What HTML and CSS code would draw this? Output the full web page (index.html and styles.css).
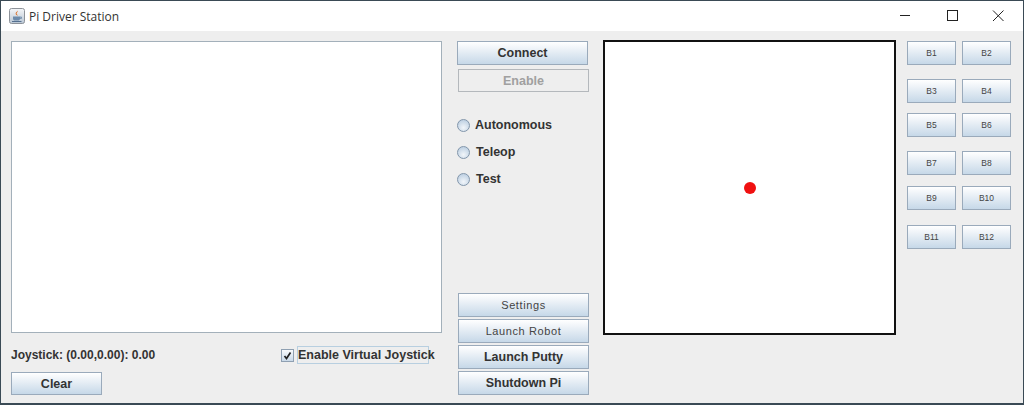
FILE: index.html
```html
<!DOCTYPE html>
<html lang="en">
<head>
<meta charset="utf-8">
<title>Pi Driver Station</title>
<link rel="stylesheet" href="styles.css">
</head>
<body>
<div class="window">
  <header class="titlebar">
    <svg class="app-icon" width="16" height="16" viewBox="0 0 16 16">
      <defs>
        <linearGradient id="tile" x1="0" y1="0" x2="0" y2="1">
          <stop offset="0" stop-color="#f4f6f8"/>
          <stop offset="1" stop-color="#b9c6d4"/>
        </linearGradient>
      </defs>
      <rect x="0.5" y="0.5" width="15" height="15" rx="2" fill="url(#tile)" stroke="#8d9299"/>
      <path d="M8.5 2.5c1 1.500-1.500 2.200-.7 3.600.4.700 1 .9.900 1.700-1-.6-2.500-1.400-2-2.800.4-1 1.800-1.300 1.800-2.500z" fill="#d9712b"/>
      <path d="M4 8.500h7v2.200c0 1.200-1 1.800-2 1.800H6c-1 0-2-.6-2-1.800z" fill="#6d8bab"/>
      <path d="M11 9h1.500v1.500H11z" fill="none" stroke="#6d8bab" stroke-width=".8"/>
      <path d="M3 13.500h9.500" stroke="#55708f" stroke-width="1"/>
    </svg>
    <span class="title-text">Pi Driver Station</span>
    <div class="caption">
      <svg class="cap-btn" width="46" height="30" viewBox="0 0 46 30"><path d="M17 14.500h10" stroke="#222" fill="none"/></svg>
      <svg class="cap-btn" width="46" height="30" viewBox="0 0 46 30"><rect x="18.500" y="9.500" width="10" height="10" stroke="#222" fill="none"/></svg>
      <svg class="cap-btn" width="46" height="30" viewBox="0 0 46 30"><path d="M18 9.500l10.500 10.500M28.500 9.500L18 20" stroke="#222" fill="none"/></svg>
    </div>
  </header>
  <main class="content">
    <section class="col-left">
      <div class="textarea"></div>
      <div class="status-row">
        <span class="joy-label">Joystick: (0.00,0.00): 0.00</span>
        <label class="check">
          <span class="check-box"><svg width="9" height="9" viewBox="0 0 9 9"><path d="M1.500 5l2 2.500L7.500 1.500" fill="none" stroke="#222" stroke-width="1.700"/></svg></span>
          <span class="check-text">Enable Virtual Joystick</span>
        </label>
      </div>
      <button class="btn btn-bold btn-clear">Clear</button>
    </section>
    <section class="col-mid">
      <button class="btn btn-bold btn-connect">Connect</button>
      <button class="btn btn-bold btn-disabled">Enable</button>
      <div class="radios">
        <div class="radio"><span class="radio-dot"></span><span>Autonomous</span></div>
        <div class="radio radio-indent"><span class="radio-dot"></span><span>Teleop</span></div>
        <div class="radio radio-indent"><span class="radio-dot"></span><span>Test</span></div>
      </div>
      <div class="actions">
        <button class="btn btn-light">Settings</button>
        <button class="btn btn-light">Launch Robot</button>
        <button class="btn btn-bold">Launch Putty</button>
        <button class="btn btn-bold">Shutdown Pi</button>
      </div>
    </section>
    <section class="canvas"><span class="dot"></span></section>
    <section class="pad">
      <div class="pad-row"><button class="btn btn-small">B1</button><button class="btn btn-small">B2</button></div>
      <div class="pad-row gap-14"><button class="btn btn-small">B3</button><button class="btn btn-small">B4</button></div>
      <div class="pad-row gap-10"><button class="btn btn-small">B5</button><button class="btn btn-small">B6</button></div>
      <div class="pad-row gap-14"><button class="btn btn-small">B7</button><button class="btn btn-small">B8</button></div>
      <div class="pad-row gap-12"><button class="btn btn-small">B9</button><button class="btn btn-small">B10</button></div>
      <div class="pad-row gap-15"><button class="btn btn-small">B11</button><button class="btn btn-small">B12</button></div>
    </section>
  </main>
</div>
</body>
</html>
```
FILE: styles.css
```css
* { box-sizing: border-box; }
html, body { margin: 0; padding: 0; }
body { width: 1024px; height: 405px; overflow: hidden; font-family: "Liberation Sans", Arial, sans-serif; }

.window {
  width: 1024px;
  height: 405px;
  display: flex;
  flex-direction: column;
  background: #eeeeee;
  border: 1px solid #3a4a55;
  border-bottom-width: 2px;
}

.titlebar {
  height: 30px;
  flex: none;
  display: flex;
  align-items: center;
  background: #ffffff;
  padding-left: 8px;
}
.app-icon { flex: none; }
.title-text {
  margin-left: 4px;
  font-family: "Open Sans", sans-serif;
  font-size: 12px;
  color: #333333;
}
.caption { margin-left: auto; display: flex; margin-right: 2px; }
.cap-btn { display: block; }

.content { flex: 1; display: flex; padding: 10px 0 0 10px; align-items: flex-start; min-height: 0; }

.btn {
  display: block;
  margin: 0;
  padding: 0;
  font-family: "Liberation Sans", Arial, sans-serif;
  color: #333333;
  border: 1px solid #9aaabb;
  background: linear-gradient(180deg, #ffffff 0%, #eef3f8 30%, #c6d8e8 100%);
  text-align: center;
}
.btn-bold { font-size: 12.500px; font-weight: bold; }
.btn-light { font-size: 11px; letter-spacing: 0.600px; color: #444444; }
.btn-small { width: 49px; height: 24px; font-size: 8.500px; color: #444444; }

.col-left { width: 431px; flex: none; display: flex; flex-direction: column; }
.textarea { height: 292px; background: #ffffff; border: 1px solid #a3b0ba; }
.status-row { display: flex; align-items: center; justify-content: space-between; height: 18px; margin-top: 13px; padding-right: 13px; }
.joy-label { font-size: 12px; font-weight: bold; color: #333333; }
.check { display: flex; align-items: center; gap: 3px; }
.check-box {
  width: 13px;
  height: 13px;
  display: flex;
  align-items: center;
  justify-content: center;
  border: 1px solid #8fa0b2;
  background: linear-gradient(180deg, #f8fafc, #c9d9e8);
}
.check-text {
  height: 18px;
  line-height: 16px;
  width: 132px;
  font-size: 12.500px;
  font-weight: bold;
  color: #333333;
  border: 1px solid #b8cfe0;
  text-align: center;
  white-space: nowrap;
}
.btn-clear { width: 91px; height: 23px; margin-top: 8px; }

.col-mid { width: 132px; height: 354px; margin-left: 15px; flex: none; display: flex; flex-direction: column; align-items: flex-start; }
.btn-connect { width: 131px; height: 24px; }
.btn-disabled {
  width: 131px;
  height: 23px;
  margin: 4px 0 0 1px;
  background: #eeeeee;
  color: #a0a0a0;
  border-color: #b4b8bc;
}
.radios { margin-top: 24px; display: flex; flex-direction: column; gap: 9px; }
.radio { display: flex; align-items: center; gap: 5px; height: 18px; font-size: 12.500px; font-weight: bold; color: #333333; }
.radio-indent { gap: 6px; }
.radio-dot {
  width: 13px;
  height: 13px;
  border-radius: 50%;
  border: 1px solid #8296ab;
  background: radial-gradient(circle at 50% 70%, #f2f6fa, #c2d3e4 75%);
}
.actions { margin-top: auto; margin-left: 1px; margin-bottom: 0; display: flex; flex-direction: column; gap: 2px; }
.actions .btn { width: 131px; height: 24px; }

.canvas {
  position: relative;
  width: 293px;
  height: 295px;
  flex: none;
  margin: -1px 0 0 14px;
  background: #ffffff;
  border: 2px solid #111111;
}
.dot {
  position: absolute;
  left: 139px;
  top: 140px;
  width: 12px;
  height: 12px;
  border-radius: 50%;
  background: #f01010;
}

.pad { margin-left: 11px; display: flex; flex-direction: column; flex: none; }
.pad-row { display: flex; gap: 6px; }
.gap-14 { margin-top: 14px; }
.gap-10 { margin-top: 10px; }
.gap-12 { margin-top: 11px; }
.gap-15 { margin-top: 15px; }
```
